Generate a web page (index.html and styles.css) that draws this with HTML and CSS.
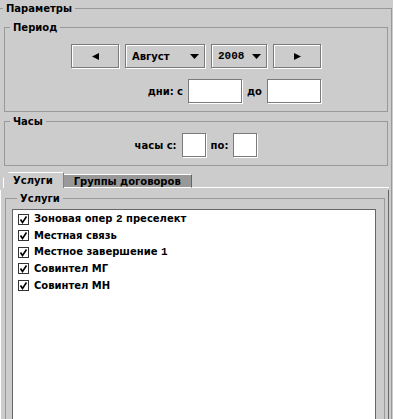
FILE: index.html
```html
<!DOCTYPE html>
<html lang="ru">
<head>
  <meta charset="UTF-8">
  <title>Параметры</title>
  <link rel="stylesheet" href="styles.css">
</head>
<body>

<fieldset class="group outer">
  <legend>Параметры</legend>

  <fieldset class="group period">
    <legend>Период</legend>
    <div class="period-grid">
      <div class="row">
        <button class="btn" type="button">
          <svg width="7" height="7" viewBox="0 0 7 7"><path d="M0 3.5L7 0V7z"/></svg>
        </button>
        <div class="combo month">
          <span>Август</span>
          <svg width="9" height="5" viewBox="0 0 9 5"><path d="M0 0H9L4.5 5z"/></svg>
        </div>
        <div class="combo year">
          <span class="num">2008</span>
          <svg width="9" height="5" viewBox="0 0 9 5"><path d="M0 0H9L4.5 5z"/></svg>
        </div>
        <button class="btn" type="button">
          <svg width="7" height="7" viewBox="0 0 7 7"><path d="M7 3.5L0 0V7z"/></svg>
        </button>
      </div>
      <div class="row days">
        <span class="label">дни: с</span>
        <input class="field wide" type="text">
        <span class="label">до</span>
        <input class="field wide" type="text">
      </div>
    </div>
  </fieldset>

  <fieldset class="group hours">
    <legend>Часы</legend>
    <div class="row">
      <span class="label">часы с:</span>
      <input class="field short" type="text">
      <span class="label">по:</span>
      <input class="field short" type="text">
    </div>
  </fieldset>

  <div class="tabs">
    <div class="tab-strip">
      <div class="tab active">Услуги</div>
      <div class="tab">Группы договоров</div>
      <div class="tab-fill"></div>
    </div>
    <div class="tab-panel">
      <fieldset class="group services">
        <legend>Услуги</legend>
        <div class="list">
          <div class="item"><svg class="check" width="11" height="11" viewBox="0 0 11 11"><rect x="0.5" y="0.5" width="10" height="10"/><path d="M2.5 5.5L4.5 8.5L8.5 2.5"/></svg><span>Зоновая опер <span class="num">2</span> преселект</span></div>
          <div class="item"><svg class="check" width="11" height="11" viewBox="0 0 11 11"><rect x="0.5" y="0.5" width="10" height="10"/><path d="M2.5 5.5L4.5 8.5L8.5 2.5"/></svg><span>Местная связь</span></div>
          <div class="item"><svg class="check" width="11" height="11" viewBox="0 0 11 11"><rect x="0.5" y="0.5" width="10" height="10"/><path d="M2.5 5.5L4.5 8.5L8.5 2.5"/></svg><span>Местное завершение <span class="num">1</span></span></div>
          <div class="item"><svg class="check" width="11" height="11" viewBox="0 0 11 11"><rect x="0.5" y="0.5" width="10" height="10"/><path d="M2.5 5.5L4.5 8.5L8.5 2.5"/></svg><span>Совинтел МГ</span></div>
          <div class="item"><svg class="check" width="11" height="11" viewBox="0 0 11 11"><rect x="0.5" y="0.5" width="10" height="10"/><path d="M2.5 5.5L4.5 8.5L8.5 2.5"/></svg><span>Совинтел МН</span></div>
        </div>
      </fieldset>
    </div>
  </div>
</fieldset>

</body>
</html>
```

FILE: styles.css
```css
* {
  box-sizing: border-box;
}

body {
  margin: 0;
  width: 393px;
  height: 419px;
  overflow: hidden;
  background: #cccccc;
  font-family: "DejaVu Sans", sans-serif;
  font-size: 10px;
  font-weight: bold;
  color: #000;
}

/* titled borders */
.group {
  margin: 0;
  padding: 0;
  min-width: 0;
  border: 1px solid #999;
}

.group > legend {
  height: 17px;
  line-height: 17px;
  padding: 0 3px;
  margin-left: 5px;
}

.outer {
  width: 393px;
  margin-left: -1px;
  height: 440px;
}

.outer > legend {
  margin-left: 3px;
}

.period {
  margin: 2px 3px 0 4px;
  padding: 8px 0 8px;
}

.hours {
  margin: 1px 3px 0 4px;
  padding: 3px 0 8px;
}

.period-grid {
  width: 250px;
  margin: 0 auto;
  display: flex;
  flex-direction: column;
  gap: 11px;
}

.row {
  display: flex;
  align-items: center;
  justify-content: center;
  gap: 6px;
}

.row.days {
  justify-content: flex-end;
  gap: 5px;
}

.hours .row {
  gap: 5px;
}

/* buttons, combos, fields */
.btn,
.combo {
  height: 24px;
  background: #cccccc;
  border: 1px solid #7a7a7a;
  box-shadow: inset 1px 1px 0 #fff, 1px 1px 0 #fff;
}

.btn {
  width: 48px;
  padding: 0;
  display: flex;
  align-items: center;
  justify-content: center;
}

.combo {
  display: flex;
  align-items: center;
  justify-content: space-between;
  padding: 0 5px 0 6px;
}

.month {
  width: 80px;
}

.year {
  width: 56px;
}

.num {
  font-family: "Liberation Mono", monospace;
  font-size: 11px;
}

.field {
  height: 24px;
  margin: 0;
  padding: 0;
  background: #fff;
  border: 1px solid #7a7a7a;
  box-shadow: 1px 1px 0 #fff;
  font: inherit;
}

.field.wide {
  width: 54px;
}

.field.short {
  width: 24px;
}

/* tabs */
.tabs {
  margin: 6px 2px 0 0;
}

.tab-strip {
  display: flex;
  align-items: flex-end;
  height: 16px;
}

.tab {
  height: 14px;
  line-height: 13px;
  padding: 0 10px;
  background: #999;
  border-top: 1px solid #fff;
  border-right: 1px solid #666;
  border-bottom: 1px solid #fff;
}

.tab.active {
  height: 16px;
  line-height: 16px;
  margin-left: 3px;
  background: #cccccc;
  border-bottom: none;
  clip-path: polygon(6px 0, 100% 0, 100% 100%, 0 100%, 0 6px);
  border-left: 1px solid #fff;
  padding-left: 9px;
}

.tab-fill {
  flex: 1;
  border-bottom: 1px solid #fff;
}

.tab-panel {
  height: 260px;
  border-left: 1px solid #fff;
  border-right: 1px solid #666;
}

.services {
  margin: 2px 3px 0 4px;
  padding: 2px 8px 0 6px;
  height: 240px;
}

.list {
  height: 220px;
  background: #fff;
  border: 1px solid #666;
  border-bottom: none;
  padding-top: 1px;
}

.item {
  display: flex;
  align-items: center;
  gap: 5px;
  height: 16.5px;
  padding-left: 5px;
}

.check {
  fill: none;
  stroke: #333;
}

.check path {
  stroke: #000;
  stroke-width: 1.6;
}
```
